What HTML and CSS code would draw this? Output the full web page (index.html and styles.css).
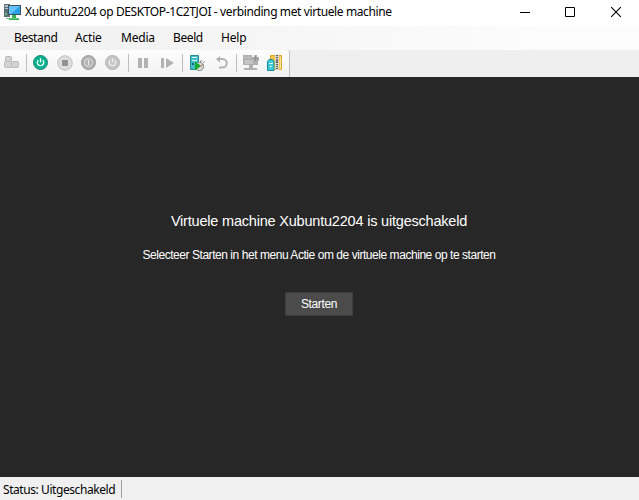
FILE: index.html
```html
<!DOCTYPE html>
<html lang="nl">
<head>
<meta charset="utf-8">
<title>Xubuntu2204</title>
<link rel="stylesheet" href="styles.css">
</head>
<body>
<div class="window">
  <header class="titlebar">
    <svg class="app-icon" width="17" height="17" viewBox="0 0 17 17">
      <path d="M0 0h6v13H0z" fill="#5d6f78"/><path d="M1 1h4v2H1zM1 4h4v1H1z" fill="#b7c5cb"/><path d="M1 9h2v2H1z" fill="#58c878"/>
      <path d="M4 1h13v10H4z" fill="#41515c"/><path d="M5 2h11v8H5z" fill="#299fe8"/><path d="M5 2h11L7 10H5z" fill="#65c3fa"/>
      <path d="M8 11h4v3h3v2H5v-2h3z" fill="#35ae55"/><path d="M2 14h13v1H2z" fill="#66cb7b"/>
    </svg>
    <h1 class="title">Xubuntu2204 op DESKTOP-1C2TJOI - verbinding met virtuele machine</h1>
    <div class="controls">
      <svg width="46" height="25" viewBox="0 0 46 25"><path d="M19 12.5h10" stroke="#000"/></svg>
      <svg width="46" height="25" viewBox="0 0 46 25"><path d="M18.5 7.5h9v9h-9z" fill="none" stroke="#000"/></svg>
      <svg width="46" height="25" viewBox="0 0 46 25"><path d="M18.2 7.2l9.6 9.6m0-9.6l-9.6 9.6" stroke="#000" stroke-width="1.1"/></svg>
    </div>
  </header>
  <nav class="menu">
    <span class="m-bestand">Bestand</span><span class="m-actie">Actie</span><span class="m-media">Media</span><span class="m-beeld">Beeld</span><span class="m-help">Help</span>
  </nav>
  <div class="toolbar">
    <div class="strip">
      <svg width="23" height="27" viewBox="0 0 23 27"><g fill="#d3d3d3" stroke="#b9b9b9"><rect x="5.500" y="6.500" width="6" height="5" rx="1"/><rect x="4.500" y="11.500" width="7" height="6" rx="1"/><rect x="11.500" y="11.500" width="7" height="6" rx="1"/></g></svg>
      <i class="sep"></i>
      <svg width="24" height="27" viewBox="0 0 24 27"><circle cx="11.500" cy="12.500" r="7" fill="#05b28f" stroke="#238675"/><path d="M9.300 10.200a3.200 3.200 0 1 0 4.400 0M11.500 8.300v4" fill="none" stroke="#fff" stroke-width="1.300"/></svg>
      <svg width="24" height="27" viewBox="0 0 24 27"><circle cx="12" cy="13" r="7.200" fill="#dedede" stroke="#bcbcbc"/><path d="M9 10h6v6H9z" fill="#929292"/></svg>
      <svg width="24" height="27" viewBox="0 0 24 27"><circle cx="11.500" cy="12.500" r="7" fill="#b0b0b0" stroke="#9c9c9c"/><circle cx="11.500" cy="12.500" r="4" fill="none" stroke="#e2e2e2"/><path d="M11.500 10v5" stroke="#ededed" stroke-width="1.300"/></svg>
      <svg width="24" height="27" viewBox="0 0 24 27"><circle cx="11.500" cy="12.500" r="7" fill="#c5c5c5" stroke="#b4b4b4"/><path d="M9.300 10.200a3.200 3.200 0 1 0 4.400 0M11.500 8.300v4" fill="none" stroke="#eee" stroke-width="1.300"/></svg>
      <i class="sep"></i>
      <svg width="24" height="27" viewBox="0 0 24 27"><path d="M7 8h4v10H7zM13 8h4v10h-4z" fill="#b3b3b3"/></svg>
      <svg width="24" height="27" viewBox="0 0 24 27"><path d="M6 8h3v10H6zM11 8l8 5-8 5z" fill="#b3b3b3"/></svg>
      <i class="sep"></i>
      <svg width="24" height="27" viewBox="0 0 24 27">
        <path d="M5.500 5.500h8v14h-8z" fill="#43bfc8" stroke="#278b95"/><path d="M7 7h5v1H7zM7 10h5v1H7z" fill="#d4f5f5"/><path d="M7 13h2v2H7z" fill="#156d77"/>
        <circle cx="14.500" cy="16.500" r="4.200" fill="#d8d8d2" stroke="#89968b"/><path d="M15.500 12l1-2M18 13l1.300-1.500" stroke="#777"/><path d="M10 11.500l6 4.500-6 4.500z" fill="#13aa29"/><path d="M15.500 16.500l2.500-2" stroke="#bd5a54"/>
      </svg>
      <svg width="24" height="27" viewBox="0 0 24 27"><path d="M8 9h5.500a4 4 0 0 1 0 8.500H10" fill="none" stroke="#b3b3b3" stroke-width="2"/><path d="M7 9.300L11 6v6.500z" fill="#b3b3b3"/></svg>
      <i class="sep"></i>
      <svg width="24" height="27" viewBox="0 0 24 27"><path d="M4 5h9v2h2V5h3v2h2v4h-1v4h-5v3h4v2H5v-2h5v-3H4z" fill="#b0b0b0"/><path d="M5 7h7v1H5zM6 10h8v4H6z" fill="#c5c5c5"/><path d="M16.500 6v5M14 8.500h5" stroke="#929292"/></svg>
      <svg width="24" height="27" viewBox="0 0 24 27">
        <path d="M7.500 5.500h11v14h-11z" fill="#f5c748" stroke="#dca522"/><path d="M17 7h1v12h-1z" fill="#fae8a0"/><path d="M12 5h4v15h-4z" fill="#d8d5c9"/><path d="M14 5v4m0 3v8" stroke="#5b5c58" stroke-width="2" stroke-dasharray="1 1"/><path d="M13 9h2v3h-2z" fill="#777"/>
        <path d="M4.500 11.500L6 9.500h3.500l1.500 2v9H4.500z" fill="#41cbd4" stroke="#168b98"/><path d="M6 13h4v1H6zM7 16h2v1H7z" fill="#d8ffff"/>
      </svg>
    </div>
  </div>
  <main class="screen">
    <h2>Virtuele machine Xubuntu2204 is uitgeschakeld</h2>
    <p>Selecteer Starten in het menu Actie om de virtuele machine op te starten</p>
    <button type="button">Starten</button>
  </main>
  <footer class="status"><span>Status: Uitgeschakeld</span></footer>
</div>
</body>
</html>
```
FILE: styles.css
```css
* { box-sizing: border-box; }
body { margin: 0; font-family: "Noto Sans", "Open Sans", sans-serif; font-size: 12px; color: #000; }
svg { display: block; flex: none; }
.window { width: 639px; height: 500px; display: flex; flex-direction: column; overflow: hidden; }
.titlebar { height: 26px; flex: none; display: flex; align-items: flex-start; background: #fff; padding-left: 4px; }
.app-icon { margin-top: 4px; }
.title { margin: 0 0 0 4px; font-size: 12px; font-weight: 400; line-height: 24px; white-space: nowrap; letter-spacing: -0.39px; }
.controls { display: flex; margin-left: auto; }
.menu { height: 24px; flex: none; display: flex; padding-left: 14px; line-height: 24px; background: linear-gradient(90deg, #f0f0f0, #fcfcfc 85%); white-space: nowrap; }
.menu span { flex: none; letter-spacing: -0.4px; }
.menu .m-actie, .menu .m-media, .menu .m-help { letter-spacing: -0.2px; }
.m-bestand { width: 61px; }
.m-actie { width: 46px; }
.m-media { width: 52px; }
.m-beeld { width: 48px; }
.toolbar { height: 27px; flex: none; background: #efefef; }
.strip { width: 290px; height: 27px; display: flex; background: linear-gradient(#fdfdfd, #f2f2f2); border-right: 1px solid #c0c0c0; border-radius: 0 3px 0 0; }
.sep { flex: none; width: 1px; height: 18px; margin: 4px 2px 0 3px; background: #bdbdbd; }
.screen { flex: 1; display: flex; flex-direction: column; align-items: center; background: #272727; color: #fff; font-family: "Liberation Sans", Arial, sans-serif; padding: 136px 1px 0 0; white-space: nowrap; }
.screen h2 { margin: 0; font-size: 14.5px; font-weight: 400; line-height: 17px; letter-spacing: -0.2px; }
.screen p { margin: 17px 0 0; font-size: 12px; line-height: 16px; letter-spacing: -0.45px; }
.screen button { width: 68px; height: 24px; margin: 29px 0 0; padding: 0; border: 1px solid #3d3d3d; background: #4b4b4b; color: #fff; font: 12px "Liberation Sans", Arial, sans-serif; letter-spacing: -0.35px; }
.status { height: 23px; flex: none; display: flex; padding: 3px 0 0 3px; background: #f0f0f0; line-height: 20px; }
.status span { width: 119px; height: 18px; border-right: 1px solid #a0a0a0; white-space: nowrap; letter-spacing: -0.43px; }
```
